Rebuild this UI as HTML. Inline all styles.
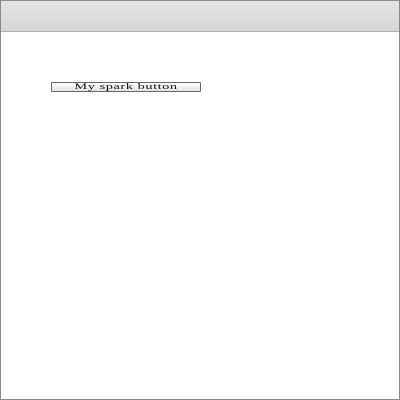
<!DOCTYPE html><html><head><style>
body{margin:0;width:400px;height:400px;overflow:hidden;background:#fff}
.f{position:absolute;left:0;top:0;width:398px;height:398px;border:1px solid #8a8a8a}
.h{position:absolute;left:0;top:0;width:398px;height:30px;background:linear-gradient(#e6e6e6,#d6d6d6);border-bottom:1px solid #b0b0b0}
.b{position:absolute;left:50px;top:81px;width:148px;height:8px;border:1px solid #666;border-radius:1px;background:linear-gradient(#fff,#e2e2e2);color:#111;overflow:hidden;white-space:nowrap}
.b span{position:absolute;left:74px;top:0;font:8px/8px "Liberation Serif",serif;transform:translateX(-50%) scaleX(1.8);letter-spacing:0.3px}
</style></head><body><div class="f"><div class="h"></div><div class="b"><span>My spark button</span></div></div></body></html>
